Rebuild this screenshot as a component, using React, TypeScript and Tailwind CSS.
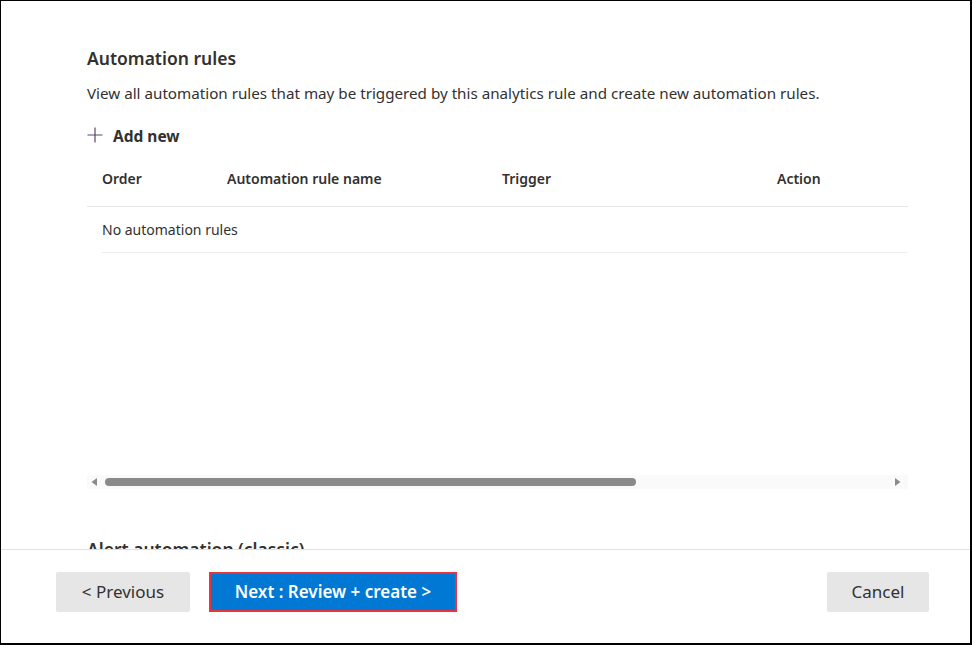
import React from "react";

export default function App() {
  const font = { fontFamily: '"Noto Sans", "Open Sans", sans-serif' };
  return (
    <div
      className="w-[972px] h-[645px] bg-white border-t border-l border-r-2 border-b-2 border-black flex flex-col text-[#323130] overflow-hidden"
      style={font}
    >
      <div className="h-[548px] overflow-hidden pl-[86px] pr-[63px] pt-[45px] flex flex-col">
        <h2 className="text-[17.5px] leading-[24px] font-semibold">Automation rules</h2>
        <p className="mt-[13px] text-[15.2px] leading-[20px]">
          View all automation rules that may be triggered by this analytics rule and create new automation rules.
        </p>
        <div className="mt-[22px] flex items-center h-[24px]">
          <svg width="16" height="16" viewBox="0 0 16 16" className="mt-[-4px]">
            <path d="M8 0.5 V15.5 M0.5 8 H15.5" stroke="#5b4668" strokeWidth="1.2" fill="none" />
          </svg>
          <span className="ml-[10px] text-[15.5px] font-bold">Add new</span>
        </div>
        <div className="mt-[3px] w-[821px]">
          <div className="flex h-[56px] items-center pl-[15px] text-[14px] font-semibold border-b border-[#e6e6e6]">
            <div className="w-[125px]">Order</div>
            <div className="w-[275px]">Automation rule name</div>
            <div className="w-[275px]">Trigger</div>
            <div>Action</div>
          </div>
          <div className="ml-[15px] flex h-[46px] items-center text-[14px] border-b border-[#ededed]">
            No automation rules
          </div>
        </div>
        <div className="mt-[222px] w-[821px] h-[14px] bg-[#fafafa] flex items-center">
          <svg width="14" height="14" viewBox="0 0 14 14">
            <path d="M10 3 L4.5 7 L10 11 Z" fill="#8a8a8a" />
          </svg>
          <div className="ml-[4px] w-[531px] h-[8px] rounded-full bg-[#8a8a8a]" />
          <div className="flex-1" />
          <svg width="14" height="14" viewBox="0 0 14 14" className="mr-[3px]">
            <path d="M4 3 L9.5 7 L4 11 Z" fill="#8a8a8a" />
          </svg>
        </div>
        <h2 className="mt-[48px] text-[17.5px] leading-[24px] font-semibold">Alert automation (classic)</h2>
      </div>
      <div className="border-t border-[#e1e1e1] flex items-start pt-[22px] pl-[55px] pr-[41px]">
        <button className="w-[134px] h-[40px] bg-[#e6e6e6] rounded-[2px] text-[17px] text-[#323130]">
          &lt; Previous
        </button>
        <button className="ml-[19px] w-[248px] h-[40px] bg-[#0078d4] border-2 border-[#e8343f] text-[17px] font-semibold text-white">
          Next : Review + create &gt;
        </button>
        <div className="flex-1" />
        <button className="w-[102px] h-[40px] bg-[#e6e6e6] rounded-[2px] text-[17px] text-[#323130]">
          Cancel
        </button>
      </div>
    </div>
  );
}
